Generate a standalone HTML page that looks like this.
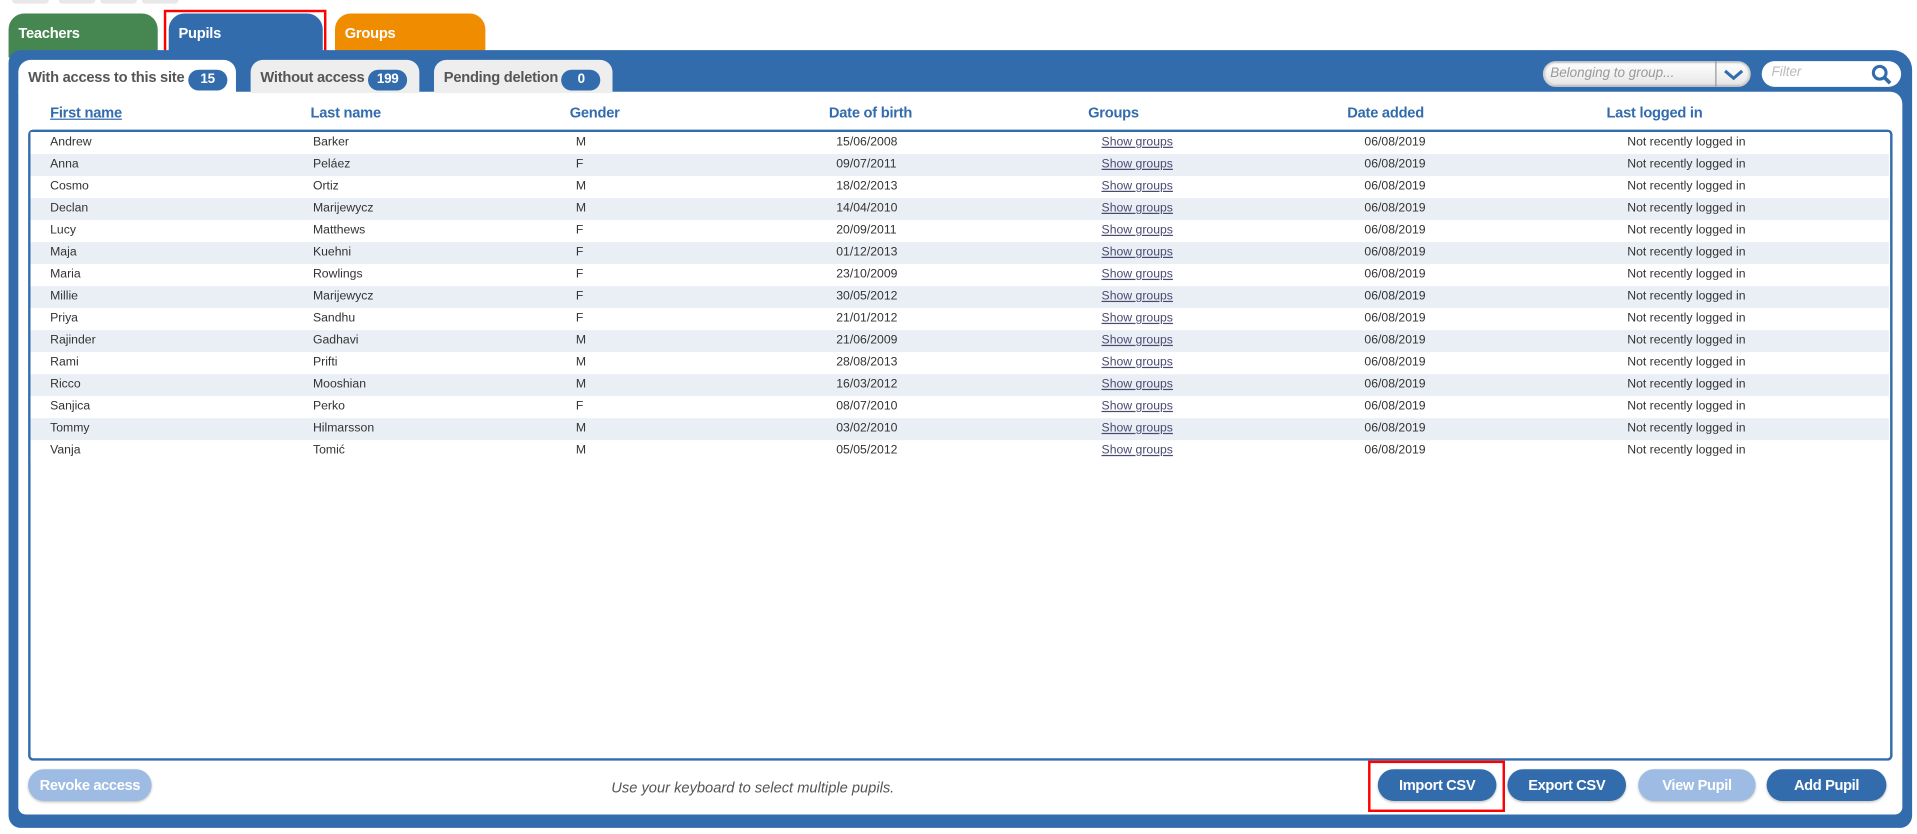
<!DOCTYPE html>
<html><head><meta charset="utf-8"><style>
*{box-sizing:border-box;margin:0;padding:0}
html,body{width:1917px;height:834px;overflow:hidden;background:#fff;font-family:"Liberation Sans",sans-serif}
#s{position:absolute;left:0;top:0;width:1568px;height:682px;transform:scale(1.22258,1.2229);transform-origin:0 0}
.a{position:absolute}
.tab{position:absolute;top:11px;height:36px;border-radius:13px 13px 0 0;color:#fff;font-weight:bold;font-size:12px;padding:9px 0 0 8px;letter-spacing:-0.2px}
.st{position:absolute;top:49px;height:27px;border-radius:10px 10px 0 0;background:#eeeeee;color:#555;font-weight:bold;font-size:12px;padding:7px 0 0 8px;letter-spacing:-0.2px;white-space:nowrap}
.st.on{background:#fff}
.bd{display:inline-block;background:#336cad;color:#fff;border-radius:10px;height:17px;line-height:17px;text-align:center;font-size:11px;margin-left:3px;vertical-align:-1px}
.h{position:absolute;top:85px;color:#336cad;font-weight:bold;font-size:12px;letter-spacing:-0.2px}
.row{position:absolute;left:25px;width:1520px;height:18px;font-size:10px;color:#333}
.row span{position:absolute;top:3px;white-space:nowrap}
.row .sg{color:#4a4a70;text-decoration:underline}
.btn{position:absolute;top:629px;height:26px;border-radius:13px;background:#336cad;color:#fff;font-weight:bold;font-size:12px;text-align:center;line-height:26px;letter-spacing:-0.3px;box-shadow:0 1px 2px rgba(0,0,0,.25)}
.btn.l{background:#9dbbe3}
</style></head><body><div id="s">
<div class="a" style="left:10px;top:-4px;width:30px;height:7px;background:#e8e8e8;border-radius:3px"></div>
<div class="a" style="left:48px;top:-4px;width:30px;height:7px;background:#e8e8e8;border-radius:3px"></div>
<div class="a" style="left:82px;top:-4px;width:30px;height:7px;background:#e8e8e8;border-radius:3px"></div>
<div class="a" style="left:116px;top:-4px;width:30px;height:7px;background:#e8e8e8;border-radius:3px"></div>

<div class="tab" style="left:7px;width:122px;background:#468651">Teachers</div>
<div class="tab" style="left:138px;width:126px;background:#336cad">Pupils</div>
<div class="tab" style="left:274px;width:123px;background:#f08c00">Groups</div>
<div class="a" style="left:134px;top:8px;width:133px;height:39px;border:2px solid #f00"></div>

<div class="a" style="left:7px;top:41px;width:1557px;height:636px;background:#336cad;border-radius:10px 16px 10px 10px"></div>
<div class="a" style="left:15px;top:75px;width:1541px;height:591px;background:#fff;border-radius:0 10px 6px 6px"></div>

<div class="st on" style="left:15px;width:178px">With access to this site<span class="bd" style="width:32px">15</span></div>
<div class="st" style="left:205px;width:138px">Without access<span class="bd" style="width:32px">199</span></div>
<div class="st" style="left:355px;width:146px">Pending deletion<span class="bd" style="width:32px">0</span></div>

<div class="a" style="left:1262px;top:50px;width:170px;height:21px;border-radius:11px;background:linear-gradient(#fff,#e6e6e6);border:1px solid #ccc;box-shadow:inset 0 0 2px #aaa"></div>
<div class="a" style="left:1268px;top:54px;font-size:11px;font-style:italic;color:#999">Belonging to group...</div>
<div class="a" style="left:1403px;top:50px;width:1px;height:21px;background:#999"></div>
<svg class="a" style="left:1408px;top:54px" width="20" height="14"><path d="M3 4l7 6 7-6" stroke="#336cad" stroke-width="2.5" fill="none"/></svg>
<div class="a" style="left:1441px;top:50px;width:114px;height:21px;border-radius:11px;background:#fff"></div>
<div class="a" style="left:1449px;top:53px;font-size:11px;font-style:italic;color:#bbb">Filter</div>
<svg class="a" style="left:1530px;top:52px" width="18" height="18"><circle cx="7.5" cy="7.5" r="5.2" stroke="#336cad" stroke-width="2.5" fill="none"/><path d="M11 11l5 5" stroke="#336cad" stroke-width="3"/></svg>

<div class="h" style="left:41px;text-decoration:underline">First name</div>
<div class="h" style="left:254px">Last name</div>
<div class="h" style="left:466px">Gender</div>
<div class="h" style="left:678px">Date of birth</div>
<div class="h" style="left:890px">Groups</div>
<div class="h" style="left:1102px">Date added</div>
<div class="h" style="left:1314px">Last logged in</div>

<div class="a" style="left:23px;top:106px;width:1525px;height:516px;border:2px solid #336cad;border-radius:4px"></div>
<div id="rows"></div>
<script>
var d=[["Andrew","Barker","M","15/06/2008"],["Anna","Peláez","F","09/07/2011"],["Cosmo","Ortiz","M","18/02/2013"],["Declan","Marijewycz","M","14/04/2010"],["Lucy","Matthews","F","20/09/2011"],["Maja","Kuehni","F","01/12/2013"],["Maria","Rowlings","F","23/10/2009"],["Millie","Marijewycz","F","30/05/2012"],["Priya","Sandhu","F","21/01/2012"],["Rajinder","Gadhavi","M","21/06/2009"],["Rami","Prifti","M","28/08/2013"],["Ricco","Mooshian","M","16/03/2012"],["Sanjica","Perko","F","08/07/2010"],["Tommy","Hilmarsson","M","03/02/2010"],["Vanja","Tomić","M","05/05/2012"]];
var h="";d.forEach(function(r,i){h+='<div class="row" style="top:'+(108+i*18)+'px;background:'+(i%2?'#eaeff6':'#fff')+'"><span style="left:16px">'+r[0]+'</span><span style="left:231px">'+r[1]+'</span><span style="left:446px">'+r[2]+'</span><span style="left:659px">'+r[3]+'</span><span class="sg" style="left:876px">Show groups</span><span style="left:1091px">06/08/2019</span><span style="left:1306px">Not recently logged in</span></div>'});
document.getElementById("rows").innerHTML=h;
</script>

<div class="btn l" style="left:23px;width:101px">Revoke access</div>
<div class="a" style="left:500px;top:637px;font-size:12px;font-style:italic;color:#555">Use your keyboard to select multiple pupils.</div>
<div class="btn" style="left:1127px;width:97px">Import CSV</div>
<div class="btn" style="left:1233px;width:97px">Export CSV</div>
<div class="btn l" style="left:1340px;width:96px">View Pupil</div>
<div class="btn" style="left:1445px;width:98px">Add Pupil</div>
<div class="a" style="left:1119px;top:622px;width:112px;height:42px;border:2px solid #f00"></div>
</div></body></html>
